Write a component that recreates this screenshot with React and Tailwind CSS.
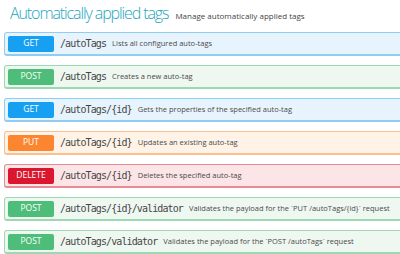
const endpoints = [
  { method: 'GET', path: '/autoTags', desc: 'Lists all configured auto-tags' },
  { method: 'POST', path: '/autoTags', desc: 'Creates a new auto-tag' },
  { method: 'GET', path: '/autoTags/{id}', desc: 'Gets the properties of the specified auto-tag' },
  { method: 'PUT', path: '/autoTags/{id}', desc: 'Updates an existing auto-tag' },
  { method: 'DELETE', path: '/autoTags/{id}', desc: 'Deletes the specified auto-tag' },
  { method: 'POST', path: '/autoTags/{id}/validator', desc: 'Validates the payload for the `PUT /autoTags/{id}` request' },
  { method: 'POST', path: '/autoTags/validator', desc: 'Validates the payload for the `POST /autoTags` request' },
]

const styles = {
  GET: { row: 'bg-[#e8f4fd] border-[#8fcdf2]', badge: 'bg-[#17a0f2]' },
  POST: { row: 'bg-[#eef8f1] border-[#9cd9b2]', badge: 'bg-[#4dbd79]' },
  PUT: { row: 'bg-[#fff3e8] border-[#fbc08e]', badge: 'bg-[#fc8630]' },
  DELETE: { row: 'bg-[#fce5e7] border-[#e98a95]', badge: 'bg-[#da172f]' },
}

function EndpointRow({ method, path, desc }) {
  const s = styles[method]
  return (
    <div className={`flex items-center h-[24px] w-[420px] rounded-[3px] border border-b-2 pl-[3px] ${s.row}`}>
      <div className={`w-[46px] h-[16px] rounded-[2px] flex items-center justify-center text-white text-[8.5px] ${s.badge}`}>
        {method}
      </div>
      <span className="ml-[6px] text-[10px] tracking-[-0.9px] text-[#474747] font-['DejaVu_Sans_Mono',monospace]">
        {path}
      </span>
      <span className="ml-[6px] text-[7.5px] text-[#4a4a4a] whitespace-nowrap">{desc}</span>
    </div>
  )
}

export default function App() {
  return (
    <div className="w-[400px] h-[254px] overflow-hidden bg-white font-['Open_Sans',sans-serif]">
      <div className="flex items-baseline pl-[10px] h-[32px]">
        <h1 className="text-[16px] leading-[26px] font-light text-[#25a6bb] tracking-[-1.1px]">Automatically applied tags</h1>
        <span className="ml-[7px] text-[8px] text-[#444]">Manage automatically applied tags</span>
      </div>
      <div className="flex flex-col gap-[9px] pl-[4px]">
        {endpoints.map((e, i) => (
          <EndpointRow key={i} {...e} />
        ))}
      </div>
    </div>
  )
}
